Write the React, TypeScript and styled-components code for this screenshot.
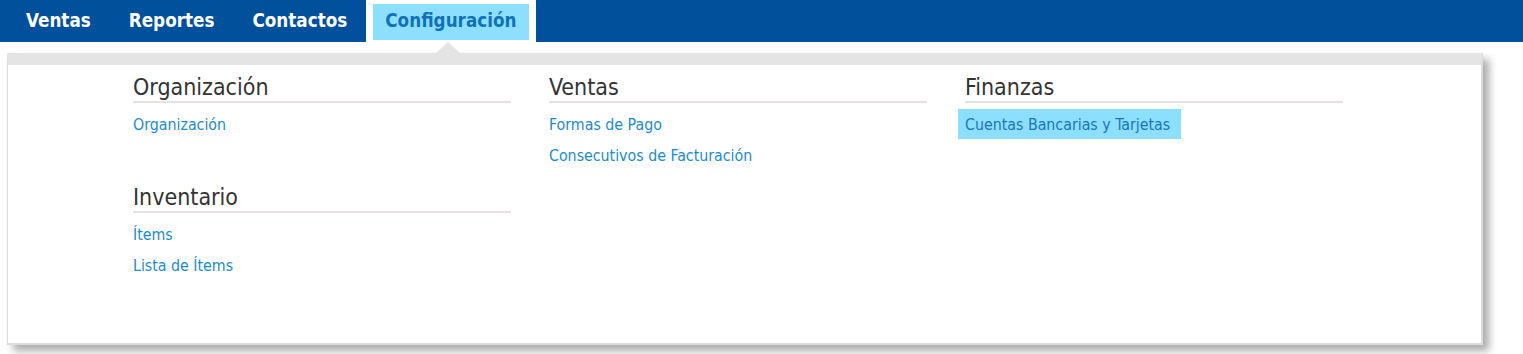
import * as React from 'react'
import styled, { createGlobalStyle } from 'styled-components'

const GlobalStyle = createGlobalStyle`
  body {
    margin: 0;
    background: #fff;
    font-family: "DejaVu Sans Condensed", "DejaVu Sans", Verdana, sans-serif;
  }
`

const NavBar = styled.nav`
  background: #00509b;
  height: 42px;
`

const NavUl = styled.ul`
  display: flex;
  list-style: none;
  margin: 0;
  padding: 0 0 0 7px;
`

const NavItem = styled.li<{ $active?: boolean }>`
  padding: 4px 7px 2px;
  background: ${p => (p.$active ? '#fff' : 'transparent')};
`

const NavLink = styled.a<{ $active?: boolean }>`
  display: block;
  height: 36px;
  line-height: 33px;
  padding: 0 12px;
  font-size: 18.7px;
  font-weight: bold;
  color: ${p => (p.$active ? '#0f72b9' : '#fff')};
  background: ${p => (p.$active ? '#8de0fd' : 'transparent')};
  text-decoration: none;
  white-space: nowrap;
`

const Page = styled.div`
  padding-bottom: 11px;
`

const Dropdown = styled.div`
  position: relative;
  box-sizing: border-box;
  margin: 11px 0 0 7px;
  width: 1476px;
  border: 1px solid #dcdcdc;
  border-width: 12px 2px 2px 1px;
  border-top-color: #e4e4e4;
  box-shadow: 6px 6px 8px rgba(0, 0, 0, 0.33);
  background: #fff;
  padding: 8px 0 63px 125px;
`

const Caret = styled.div`
  position: absolute;
  top: -23px;
  left: 428px;
  width: 0;
  height: 0;
  border-left: 12px solid transparent;
  border-right: 12px solid transparent;
  border-bottom: 11px solid #e4e4e4;
`

const Columns = styled.div`
  display: grid;
  grid-template-columns: repeat(3, 378px);
  column-gap: 38px;
`

const Column = styled.div`
  display: flex;
  flex-direction: column;
  gap: 44px;
`

const Section = styled.section`
  display: flex;
  flex-direction: column;
`

const Heading = styled.h2`
  margin: 0;
  height: 28px;
  line-height: 29px;
  font-size: 23px;
  font-weight: normal;
  color: #333;
  border-bottom: 2px solid #e6e2e4;
`

const LinkList = styled.div`
  display: flex;
  flex-direction: column;
  align-items: flex-start;
  margin-top: 6px;
  gap: 1px;
`

const MenuLink = styled.a<{ $hover?: boolean }>`
  display: block;
  box-sizing: border-box;
  height: 30px;
  line-height: 28px;
  padding: 2px 11px 0 7px;
  margin-left: -7px;
  font-size: 15.8px;
  color: ${p => (p.$hover ? '#1875bd' : '#1b8ccb')};
  background: ${p => (p.$hover ? '#8de0fd' : 'transparent')};
  text-decoration: none;
  white-space: nowrap;
`

type Group = { title: string; links: { label: string; hover?: boolean }[] }

const columns: Group[][] = [
  [
    { title: 'Organización', links: [{ label: 'Organización' }] },
    { title: 'Inventario', links: [{ label: 'Ítems' }, { label: 'Lista de Ítems' }] },
  ],
  [
    {
      title: 'Ventas',
      links: [{ label: 'Formas de Pago' }, { label: 'Consecutivos de Facturación' }],
    },
  ],
  [
    {
      title: 'Finanzas',
      links: [{ label: 'Cuentas Bancarias y Tarjetas', hover: true }],
    },
  ],
]

const tabs = ['Ventas', 'Reportes', 'Contactos', 'Configuración']

const App = () => (
  <Page>
    <GlobalStyle />
    <NavBar>
      <NavUl>
        {tabs.map(t => (
          <NavItem key={t} $active={t === 'Configuración'}>
            <NavLink href="#" $active={t === 'Configuración'}>
              {t}
            </NavLink>
          </NavItem>
        ))}
      </NavUl>
    </NavBar>
    <Dropdown>
      <Caret />
      <Columns>
        {columns.map((groups, i) => (
          <Column key={i}>
            {groups.map(g => (
              <Section key={g.title}>
                <Heading>{g.title}</Heading>
                <LinkList>
                  {g.links.map(l => (
                    <MenuLink key={l.label} href="#" $hover={l.hover}>
                      {l.label}
                    </MenuLink>
                  ))}
                </LinkList>
              </Section>
            ))}
          </Column>
        ))}
      </Columns>
    </Dropdown>
  </Page>
)

export default App
